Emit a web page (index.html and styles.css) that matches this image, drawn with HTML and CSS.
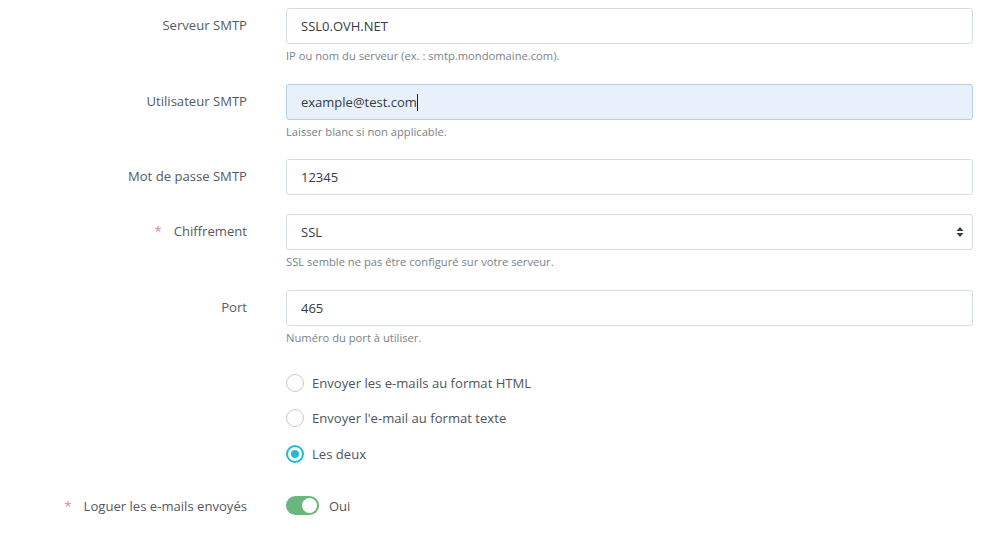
FILE: index.html
```html
<!DOCTYPE html>
<html lang="fr">
<head>
<meta charset="utf-8">
<title>SMTP</title>
<link rel="stylesheet" href="styles.css">
</head>
<body>
<form class="form">
  <div class="group">
    <label class="label">Serveur SMTP</label>
    <div class="field">
      <div class="input">SSL0.OVH.NET</div>
      <div class="help">IP ou nom du serveur (ex. : smtp.mondomaine.com).</div>
    </div>
  </div>
  <div class="group">
    <label class="label">Utilisateur SMTP</label>
    <div class="field">
      <div class="input focus">example@test.com<span class="caret"></span></div>
      <div class="help">Laisser blanc si non applicable.</div>
    </div>
  </div>
  <div class="group">
    <label class="label">Mot de passe SMTP</label>
    <div class="field">
      <div class="input">12345</div>
    </div>
  </div>
  <div class="group">
    <label class="label"><span class="req">*</span>Chiffrement</label>
    <div class="field">
      <div class="input select">SSL
        <svg class="arrows" width="8" height="12" viewBox="0 0 8 12"><path d="M4 1 L7.5 5 H0.5 Z M4 11 L7.5 7 H0.5 Z" fill="#363a41"/></svg>
      </div>
      <div class="help">SSL semble ne pas être configuré sur votre serveur.</div>
    </div>
  </div>
  <div class="group">
    <label class="label">Port</label>
    <div class="field">
      <div class="input">465</div>
      <div class="help">Numéro du port à utiliser.</div>
    </div>
  </div>
  <div class="group">
    <div class="label"></div>
    <div class="field radios">
      <div class="radio"><span class="circle"></span>Envoyer les e-mails au format HTML</div>
      <div class="radio"><span class="circle"></span>Envoyer l'e-mail au format texte</div>
      <div class="radio"><span class="circle checked"></span>Les deux</div>
    </div>
  </div>
  <div class="group toggle-row">
    <label class="label"><span class="req">*</span>Loguer les e-mails envoyés</label>
    <div class="field toggle-field">
      <span class="switch"><span class="knob"></span></span>
      <span class="oui">Oui</span>
    </div>
  </div>
</form>
</body>
</html>
```
FILE: styles.css
```css
html, body {
  margin: 0;
  padding: 0;
  background: #ffffff;
}
body {
  font-family: "Open Sans", "Noto Sans", sans-serif;
  font-size: 13px;
  color: #363a41;
}
.form {
  padding-top: 8px;
  width: 1000px;
}
.group {
  display: grid;
  grid-template-columns: 286px 687px;
  margin-bottom: 19px;
}
.label {
  text-align: right;
  padding-right: 39px;
  padding-top: 8px;
  line-height: 18px;
  color: #555a5f;
  font-size: 13.1px;
}
.req {
  color: #e0848c;
  margin-right: 12px;
}
.input {
  box-sizing: border-box;
  height: 36px;
  border: 1px solid #d6dde0;
  border-radius: 3px;
  background: #fff;
  padding: 0 14px;
  line-height: 34px;
  color: #363a41;
  font-size: 13px;
  position: relative;
}
.input.focus {
  background: #e7f0fb;
  border-color: #b4d4e3;
}
.caret {
  display: inline-block;
  width: 1px;
  height: 17px;
  background: #222;
  vertical-align: -4px;
}
.arrows {
  position: absolute;
  right: 8px;
  top: 11px;
}
.help {
  margin-top: 4px;
  line-height: 16.5px;
  font-size: 11.2px;
  color: #7a8288;
}
.radios {
  display: flex;
  flex-direction: column;
}
.radio {
  display: flex;
  align-items: center;
  height: 35.5px;
  color: #4f5459;
  font-size: 13.1px;
}
.circle {
  box-sizing: border-box;
  width: 18px;
  height: 18px;
  border: 1.5px solid #c4cdd1;
  border-radius: 50%;
  margin-right: 8px;
  background: #fff;
  display: inline-flex;
  align-items: center;
  justify-content: center;
}
.circle.checked {
  border: 2px solid #25b9d7;
}
.circle.checked::after {
  content: "";
  width: 8px;
  height: 8px;
  border-radius: 50%;
  background: #25b9d7;
}
.toggle-row {
  margin-top: 8.5px;
}
.toggle-row .label {
  padding-top: 6px;
}
.toggle-field {
  display: flex;
  align-items: center;
  height: 30px;
}
.switch {
  box-sizing: border-box;
  width: 33px;
  height: 19px;
  border-radius: 10px;
  background: #6ab67c;
  display: inline-flex;
  align-items: center;
  justify-content: flex-end;
  padding: 2px;
  margin-right: 10px;
}
.knob {
  width: 15px;
  height: 15px;
  border-radius: 50%;
  background: #fff;
}
.oui {
  color: #4f5459;
}
```
